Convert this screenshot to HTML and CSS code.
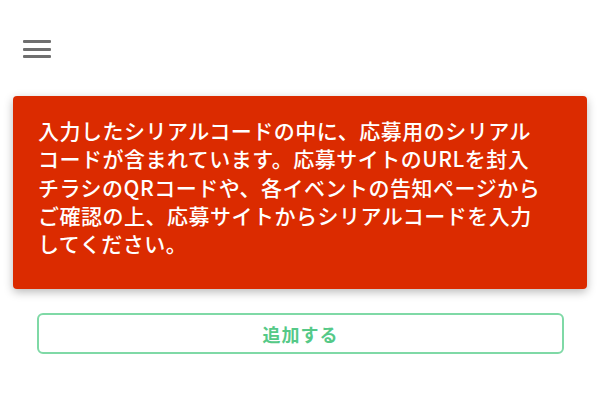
FILE: index.html
```html
<!DOCTYPE html>
<html lang="ja">
<head>
  <meta charset="UTF-8">
  <title>シリアルコード</title>
  <link rel="stylesheet" href="styles.css">
</head>
<body>

  <div class="header">
    <button class="menu" aria-label="メニュー">
      <span></span><span></span><span></span>
    </button>
  </div>

  <div class="notice">
    入力したシリアルコードの中に、応募用のシリアルコードが含まれています。応募サイトのURLを封入チラシのQRコードや、各イベントの告知ページからご確認の上、応募サイトからシリアルコードを入力してください。
  </div>

  <div class="actions">
    <button class="add">追加する</button>
  </div>

</body>
</html>
```

FILE: styles.css
```css
body { margin: 0; background: #fff; font-family: "Noto Sans CJK JP", "Noto Sans", sans-serif; }
.header { padding: 40px 0 0 23px; height: 96px; box-sizing: border-box; }
.menu { display: flex; flex-direction: column; gap: 4.5px; width: 28px; padding: 0; border: none; background: none; cursor: pointer; }
.menu span { display: block; height: 3px; background: #6f6f6f; border-radius: 1px; }
.notice { margin: 0 13px; padding: 20px 38px 32px 25px; background: #db2b00; color: #fff; font-size: 21px; font-weight: 500; line-height: 28.3px; letter-spacing: 0.5px; border-radius: 4px; box-shadow: 0 3px 10px rgba(0, 0, 0, 0.28); }
.actions { padding: 24px 36px 0 37px; }
.add { display: block; width: 100%; height: 41px; background: #fff; border: 2px solid #7fd9a6; border-radius: 6px; color: #55c987; font-family: inherit; font-size: 18px; font-weight: bold; letter-spacing: 1px; cursor: pointer; }
```
